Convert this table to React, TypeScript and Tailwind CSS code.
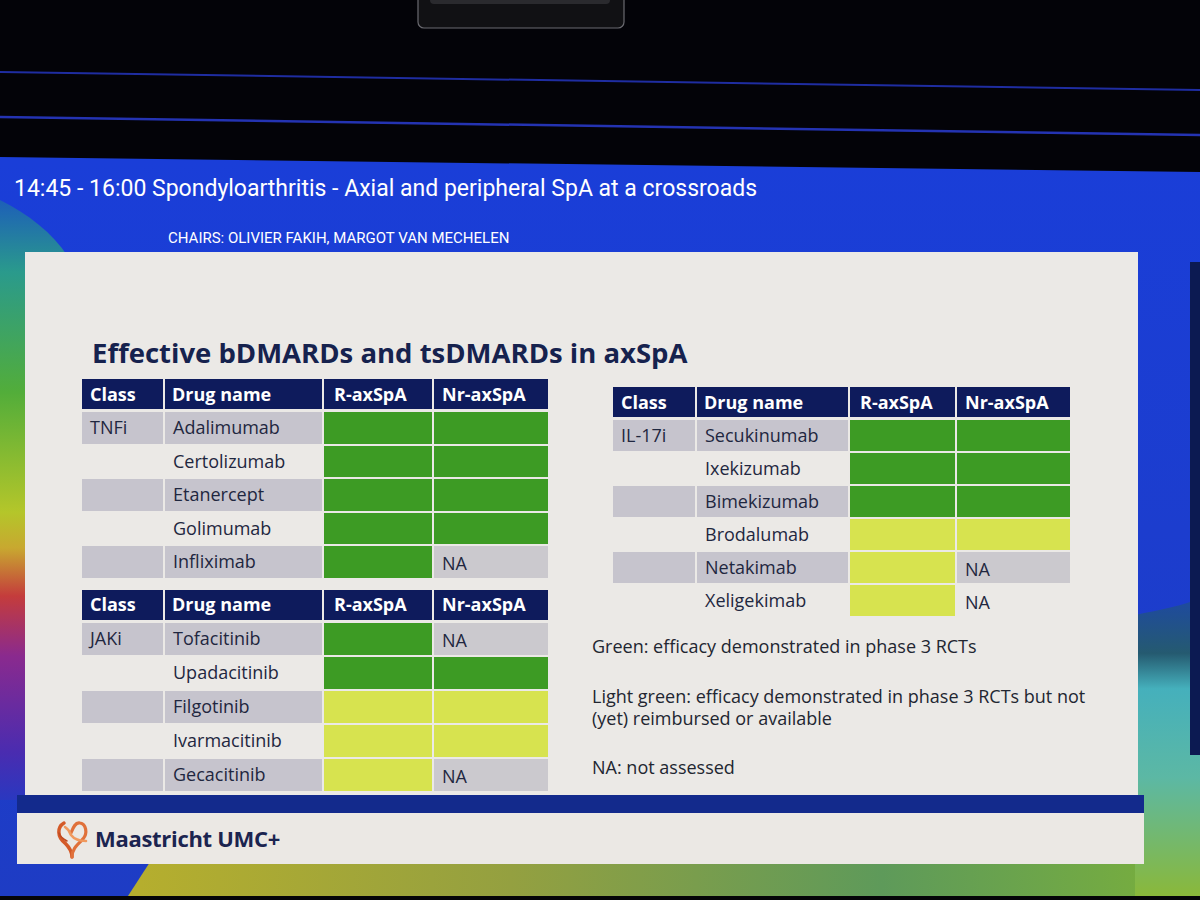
import React from "react";

type Val = "G" | "L" | "NA";
type Row = { cls: string; drug: string; r: Val; nr: Val; shaded: boolean };

const tnfi: Row[] = [
  { cls: "TNFi", drug: "Adalimumab", r: "G", nr: "G", shaded: true },
  { cls: "", drug: "Certolizumab", r: "G", nr: "G", shaded: false },
  { cls: "", drug: "Etanercept", r: "G", nr: "G", shaded: true },
  { cls: "", drug: "Golimumab", r: "G", nr: "G", shaded: false },
  { cls: "", drug: "Infliximab", r: "G", nr: "NA", shaded: true },
];

const jaki: Row[] = [
  { cls: "JAKi", drug: "Tofacitinib", r: "G", nr: "NA", shaded: true },
  { cls: "", drug: "Upadacitinib", r: "G", nr: "G", shaded: false },
  { cls: "", drug: "Filgotinib", r: "L", nr: "L", shaded: true },
  { cls: "", drug: "Ivarmacitinib", r: "L", nr: "L", shaded: false },
  { cls: "", drug: "Gecacitinib", r: "L", nr: "NA", shaded: true },
];

const il17: Row[] = [
  { cls: "IL-17i", drug: "Secukinumab", r: "G", nr: "G", shaded: true },
  { cls: "", drug: "Ixekizumab", r: "G", nr: "G", shaded: false },
  { cls: "", drug: "Bimekizumab", r: "G", nr: "G", shaded: true },
  { cls: "", drug: "Brodalumab", r: "L", nr: "L", shaded: false },
  { cls: "", drug: "Netakimab", r: "L", nr: "NA", shaded: true },
  { cls: "", drug: "Xeligekimab", r: "L", nr: "NA", shaded: false },
];

function ValCell({ v, shaded }: { v: Val; shaded: boolean }) {
  if (v === "G") return <div className="bg-[#3d9b24]" />;
  if (v === "L") return <div className="bg-[#d7e34f]" />;
  return (
    <div className={`flex items-center pl-[8px] pt-[4px] ${shaded ? "bg-[#cbc9ce]" : ""}`}>
      NA
    </div>
  );
}

function Table({
  rows,
  cols,
  rowH,
}: {
  rows: Row[];
  cols: string;
  rowH: string;
}) {
  return (
    <div className="flex flex-col gap-[2px] text-[18px] text-[#1f2740]">
      <div className={`grid ${cols} gap-[2px] h-[30px] mb-[1px] text-white font-bold`}>
        <div className="bg-[#0e1b5c] flex items-center pl-[8px]">Class</div>
        <div className="bg-[#0e1b5c] flex items-center pl-[7px]">Drug name</div>
        <div className="bg-[#0e1b5c] flex items-center pl-[10px]">R-axSpA</div>
        <div className="bg-[#0e1b5c] flex items-center pl-[8px]">Nr-axSpA</div>
      </div>
      {rows.map((r, i) => (
        <div key={i} className={`grid ${cols} gap-[2px] ${rowH}`}>
          <div className={`flex items-center pl-[8px] ${r.shaded ? "bg-[#c6c4cd]" : ""}`}>{r.cls}</div>
          <div className={`flex items-center pl-[8px] ${r.shaded ? "bg-[#c6c4cd]" : ""}`}>{r.drug}</div>
          <ValCell v={r.r} shaded={r.shaded} />
          <ValCell v={r.nr} shaded={r.shaded} />
        </div>
      ))}
    </div>
  );
}

function Logo() {
  return (
    <svg width="36" height="40" viewBox="0 0 36 40" fill="none">
      <path d="M9 4 C2 8, 2 18, 10 24 C14 28, 17 32, 17 38" stroke="#d45a28" strokeWidth="3.5" strokeLinecap="round" />
      <path d="M17 38 C17 30, 22 26, 28 20 C33 14, 31 5, 25 4 C20 3, 18 9, 16 14" stroke="#e0703a" strokeWidth="3.2" strokeLinecap="round" />
      <path d="M10 8 C13 10, 15 13, 16 16 C19 20, 24 22, 31 22" stroke="#f0995e" strokeWidth="2.6" strokeLinecap="round" />
      <path d="M4 14 C5 18, 8 20, 12 22" stroke="#c04a20" strokeWidth="1.6" strokeLinecap="round" />
    </svg>
  );
}

function Background() {
  return (
    <svg className="absolute inset-0" width="1200" height="900" viewBox="0 0 1200 900">
      <defs>
        <linearGradient id="leftg" x1="0" y1="200" x2="0" y2="800" gradientUnits="userSpaceOnUse">
          <stop offset="0" stopColor="#1d5fb8" />
          <stop offset="0.12" stopColor="#2a9a8c" />
          <stop offset="0.32" stopColor="#52ad3a" />
          <stop offset="0.52" stopColor="#b4c62a" />
          <stop offset="0.58" stopColor="#c8a830" />
          <stop offset="0.66" stopColor="#c43c3c" />
          <stop offset="0.76" stopColor="#8a2a8e" />
          <stop offset="0.92" stopColor="#4a2cb0" />
          <stop offset="1" stopColor="#2a38c0" />
        </linearGradient>
        <linearGradient id="bottomg" x1="140" y1="0" x2="1200" y2="0" gradientUnits="userSpaceOnUse">
          <stop offset="0" stopColor="#b5ae2e" />
          <stop offset="0.35" stopColor="#94a040" />
          <stop offset="0.7" stopColor="#5e9a5a" />
          <stop offset="1" stopColor="#7bb03a" />
        </linearGradient>
        <linearGradient id="rightg" x1="0" y1="600" x2="0" y2="896" gradientUnits="userSpaceOnUse">
          <stop offset="0" stopColor="#1e4aa0" />
          <stop offset="0.18" stopColor="#255a70" />
          <stop offset="0.3" stopColor="#45b0bc" />
          <stop offset="0.6" stopColor="#5cb8a4" />
          <stop offset="1" stopColor="#8ab83a" />
        </linearGradient>
        <linearGradient id="blueg" x1="0" y1="160" x2="0" y2="900" gradientUnits="userSpaceOnUse">
          <stop offset="0" stopColor="#1a3ed8" />
          <stop offset="1" stopColor="#1e3cc4" />
        </linearGradient>
      </defs>
      <rect x="0" y="0" width="1200" height="900" fill="#030308" />
      <path d="M0 72 L1200 90" stroke="#2638c8" strokeWidth="2" opacity="0.8" />
      <path d="M0 117 L1200 135" stroke="#2a3cd0" strokeWidth="2.5" opacity="0.85" />
      <rect x="418" y="-12" width="206" height="40" rx="6" fill="#111114" stroke="#6a6a70" strokeWidth="1.2" />
      <rect x="430" y="-12" width="180" height="16" rx="4" fill="#2a2a2e" />
      <polygon points="0,157 1200,172 1200,896 0,896" fill="url(#blueg)" />
      <path d="M0 200 C30 215, 55 235, 70 260 L70 800 L0 800 Z" fill="url(#leftg)" />
      <polygon points="150,862 1200,862 1200,896 128,896" fill="url(#bottomg)" />
      <path d="M1135 615 C1160 610, 1185 605, 1200 598 L1200 896 L1135 896 Z" fill="url(#rightg)" />
      <rect x="1190" y="262" width="10" height="493" fill="#0c1a52" />
      <rect x="0" y="896" width="1200" height="4" fill="#050508" />
    </svg>
  );
}

export default function App() {
  const leftCols = "grid-cols-[81px_157px_108px_114px]";
  const rightCols = "grid-cols-[82px_151px_105px_113px]";
  return (
    <div className="relative w-[1200px] h-[900px] overflow-hidden bg-black font-['Open_Sans',sans-serif]">
      <Background />
      <div className="relative flex flex-col">
        <div className="h-[175px]" />
        <div className="pl-[14px] h-[28px] leading-[28px] text-[23px] text-white font-['Roboto',sans-serif] whitespace-nowrap">
          14:45 - 16:00 Spondyloarthritis - Axial and peripheral SpA at a crossroads
        </div>
        <div className="pl-[168px] mt-[26px] h-[18px] leading-[18px] text-[15px] text-white font-['Roboto',sans-serif] whitespace-nowrap">
          CHAIRS: OLIVIER FAKIH, MARGOT VAN MECHELEN
        </div>
        <div className="mt-[5px] ml-[17px] w-[1127px] flex flex-col">
          <div className="ml-[8px] w-[1113px] h-[543px] bg-[#ebe9e6] flex flex-col">
            <div className="pt-[84px] pl-[67px] text-[27.5px] leading-[34px] font-bold text-[#16224e] whitespace-nowrap">
              Effective bDMARDs and tsDMARDs in axSpA
            </div>
            <div className="flex flex-row pl-[57px] mt-[9px] gap-[45px]">
              <div className="flex flex-col w-[465px] gap-[12px]">
                <Table rows={tnfi} cols={leftCols} rowH="h-[31.5px]" />
                <Table rows={jaki} cols={leftCols} rowH="h-[32px]" />
              </div>
              <div className="flex flex-col pt-[8px]">
                <div className="ml-[21px]">
                  <Table rows={il17} cols={rightCols} rowH="h-[31px]" />
                </div>
                <div className="mt-[19px] text-[18px] leading-[22px] text-[#222631] whitespace-nowrap">
                  <div>Green: efficacy demonstrated in phase 3 RCTs</div>
                  <div className="mt-[28px]">Light green: efficacy demonstrated in phase 3 RCTs but not</div>
                  <div>(yet) reimbursed or available</div>
                  <div className="mt-[27px]">NA: not assessed</div>
                </div>
              </div>
            </div>
          </div>
          <div className="h-[18px] bg-[#132a8c]" />
          <div className="h-[51px] bg-[#ebe8e4] flex items-center pl-[38px] gap-[4px]">
            <Logo />
            <span className="text-[22px] font-bold text-[#1b2450] tracking-[-0.3px]">Maastricht UMC+</span>
          </div>
        </div>
      </div>
    </div>
  );
}
